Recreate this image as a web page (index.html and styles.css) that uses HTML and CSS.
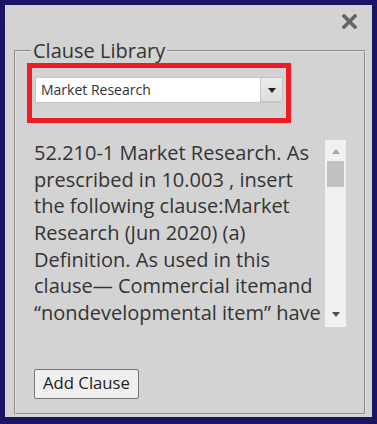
FILE: index.html
```html
<!DOCTYPE html>
<html>
<head>
<meta charset="utf-8">
<link rel="stylesheet" href="styles.css">
</head>
<body>
<div class="dialog">
  <div class="header">
    <svg class="close" width="15" height="15" viewBox="0 0 15 15"><path d="M2 2 L13 13 M13 2 L2 13" stroke="#646464" stroke-width="3.6" stroke-linecap="square"/></svg>
  </div>
  <fieldset class="library">
    <legend class="legend">Clause Library</legend>
    <div class="highlight">
      <div class="combo">
        <span class="combo-text">Market Research</span>
        <span class="combo-btn"><span class="tri"></span></span>
      </div>
    </div>
    <div class="clause-row">
      <div class="clause-text">52.210-1 Market Research. As prescribed in 10.003 , insert the following clause:Market Research (Jun 2020) (a) Definition. As used in this clause— Commercial itemand “nondevelopmental item” have the meaning given in Federal Acquisition Regulation 2.101. (b) Before awarding any contract, the contractor shall conduct market research to determine if commercial items or nondevelopmental items are available.</div>
      <div class="scrollbar">
        <span class="arrow-up"></span>
        <span class="thumb"></span>
        <span class="track-fill"></span>
        <span class="arrow-down"></span>
      </div>
    </div>
    <button class="add-btn">Add Clause</button>
  </fieldset>
</div>
</body>
</html>
```
FILE: styles.css
```css
html, body {
  margin: 0;
  padding: 0;
  background: #1b1464;
}
body {
  width: 377px;
  height: 424px;
  overflow: hidden;
  font-family: "Open Sans", sans-serif;
  color: #333;
}
.dialog {
  margin: 5px;
  width: 367px;
  height: 412px;
  background: #d3d3d3;
  display: flex;
  flex-direction: column;
  box-sizing: border-box;
}
.header {
  height: 33px;
  display: flex;
  justify-content: flex-end;
  align-items: flex-start;
}
.close {
  margin-top: 9px;
  margin-right: 15px;
  display: block;
}
.library {
  margin: 0 6px 0 9px;
  padding: 0 11px 14px 11px;
  border: 2px groove #e0e0e0;
  min-width: 0;
}
.legend {
  font-size: 20px;
  line-height: 25px;
  padding: 0 2px;
  margin-left: 4px;
  color: #333;
}
.highlight {
  width: 264px;
  box-sizing: border-box;
  border: 5px solid #ed1c24;
  padding: 9px 3px 15px 3px;
}
.combo {
  height: 26px;
  box-sizing: border-box;
  border: 1px solid #c5c5c5;
  border-radius: 2px;
  background: #fff;
  display: flex;
  align-items: stretch;
}
.combo-text {
  flex: 1;
  font-size: 14px;
  line-height: 24px;
  padding-left: 5px;
  color: #333;
}
.combo-btn {
  width: 21px;
  border-left: 1px solid #c5c5c5;
  background: linear-gradient(#ececec, #dcdcdc);
  display: flex;
  align-items: center;
  justify-content: center;
  box-shadow: inset 0 -1px 0 #c8c8c8;
}
.tri {
  width: 0;
  height: 0;
  border-left: 4.5px solid transparent;
  border-right: 4.5px solid transparent;
  border-top: 5px solid #222;
}
.clause-row {
  margin-top: 17px;
  margin-left: 7px;
  display: flex;
  height: 187px;
}
.clause-text {
  flex: none;
  width: 289px;
  height: 187px;
  overflow: hidden;
  font-size: 20px;
  line-height: 26.67px;
  color: #333;
}
.scrollbar {
  flex: none;
  margin-left: 2px;
  width: 21px;
  height: 187px;
  background: #f1f1f1;
  display: flex;
  flex-direction: column;
  align-items: center;
}
.arrow-up {
  margin-top: 9px;
  width: 0;
  height: 0;
  border-left: 4.5px solid transparent;
  border-right: 4.5px solid transparent;
  border-bottom: 5px solid #a3a3a3;
}
.thumb {
  margin-top: 7px;
  width: 17px;
  height: 26px;
  background: #c1c1c1;
}
.track-fill {
  flex: 1;
}
.arrow-down {
  margin-bottom: 10px;
  width: 0;
  height: 0;
  border-left: 4.5px solid transparent;
  border-right: 4.5px solid transparent;
  border-top: 5px solid #505050;
}
.add-btn {
  margin-top: 42px;
  margin-left: 7px;
  width: 105px;
  height: 30px;
  font-family: "Open Sans", sans-serif;
  font-size: 16.7px;
  line-height: 26px;
  color: #222;
  background: #efefef;
  border: 1px solid #767676;
  border-radius: 2px;
  padding: 0 0 2px 0;
  display: block;
}
```
